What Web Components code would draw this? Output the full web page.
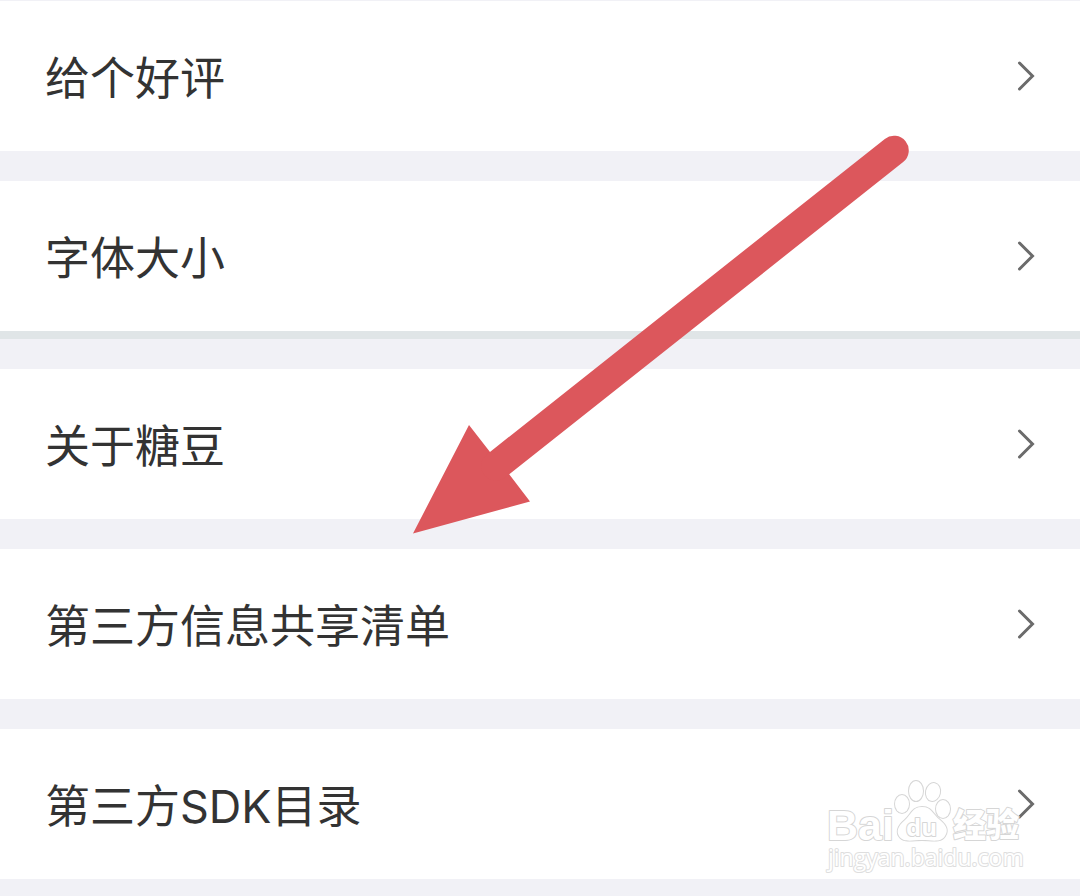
<!DOCTYPE html>
<html lang="zh-CN">
<head>
<meta charset="utf-8">
<meta name="viewport" content="width=device-width, initial-scale=1">
<title>设置</title>
<style>
  body {
    margin: 0;
    background: #f1f1f6;
    color: #333;
    font-family: Inter, "Noto Sans CJK SC", sans-serif;
  }
</style>
</head>
<body>
<settings-page>
  <settings-row href="#rate">给个好评</settings-row>
  <settings-row href="#font-size" divided>字体大小</settings-row>
  <settings-row href="#about">关于糖豆</settings-row>
  <settings-row href="#sharing">第三方信息共享清单</settings-row>
  <settings-row href="#sdk">第三方SDK目录</settings-row>
  <pointer-arrow slot="overlay"></pointer-arrow>
  <site-watermark slot="overlay"></site-watermark>
</settings-page>

<script>
class ShadowElement extends HTMLElement {
  constructor() {
    super();
    this.attachShadow({ mode: "open" }).innerHTML = this.constructor.markup;
  }
}

class SettingsPage extends ShadowElement {
  static markup = `
    <style>
      :host { display: block; position: relative; min-height: 100vh; overflow: hidden; box-sizing: border-box; border-top: 1px solid #f1f1f6; }
      nav { display: flex; flex-direction: column; gap: 30px; }
    </style>
    <nav aria-label="设置"><slot></slot></nav>
    <slot name="overlay"></slot>`;
}

class SettingsRow extends ShadowElement {
  static markup = `
    <style>
      :host { display: block; background: #fff; }
      :host([divided]) { border-bottom: 8px solid #e0e5e7; }
      a { display: flex; align-items: center; justify-content: space-between; padding: 45px; line-height: 54px; font-size: 45px; color: inherit; text-decoration: none; }
      span { padding-top: 6px; }
      svg { flex: none; width: 18px; height: 30px; }
    </style>
    <a><span><slot></slot></span>
      <svg viewBox="0 0 18 30" aria-hidden="true"><path d="M2.5 2 15.5 15 2.5 28" fill="none" stroke="#6b6b6b" stroke-width="3" stroke-linecap="round"/></svg>
    </a>`;
  connectedCallback() {
    this.shadowRoot.querySelector("a").href = this.getAttribute("href");
  }
}

class PointerArrow extends ShadowElement {
  static markup = `
    <style>
      :host { display: block; position: absolute; top: 0; left: 0; right: 0; pointer-events: none; }
      svg { display: block; width: 100%; }
    </style>
    <svg viewBox="0 1 1080 895" fill="#dc575c" aria-hidden="true">
      <path d="M413 533.500 469 425 490 452 509 474 530 501.500Z"/>
      <path d="M496 466 894 150.500" stroke="#dc575c" stroke-width="29.500" stroke-linecap="round"/>
    </svg>`;
}

class SiteWatermark extends ShadowElement {
  static markup = `
    <style>
      :host { display: block; position: absolute; right: 55px; bottom: 16px; width: 200px; pointer-events: none; }
      svg { display: block; width: 100%; }
      g { fill: #fff; stroke: #d6d6d6; stroke-width: 2; stroke-linejoin: round; paint-order: stroke; }
      .latin { font: bold 43px "Liberation Sans", sans-serif; }
      .du { font: bold 24px "Open Sans", sans-serif; }
      .han { font: 900 33px "Noto Sans CJK SC", sans-serif; }
      .url { font: 23px "Open Sans", sans-serif; stroke: #dedede; }
    </style>
    <svg viewBox="0 0 200 102" role="img" aria-label="百度经验">
      <g>
        <text class="latin" x="2" y="62">Bai</text>
        <ellipse cx="77" cy="26" rx="7" ry="9"/>
        <ellipse cx="91" cy="13" rx="7" ry="10"/>
        <ellipse cx="108" cy="14" rx="7" ry="9" transform="rotate(12 108 14)"/>
        <ellipse cx="118" cy="31" rx="7" ry="9"/>
        <path d="M97 29C87 29 86 37 80 42C73 48 71 53 74 58C78 65 88 62 97 62C106 62 116 65 120 58C124 52 121 47 115 42C108 37 107 29 97 29Z"/>
        <text class="du" x="81" y="58">du</text>
        <text class="han" x="128" y="59">经验</text>
        <text class="url" x="3" y="88">jingyan.baidu.com</text>
      </g>
    </svg>`;
}

customElements.define("settings-page", SettingsPage);
customElements.define("settings-row", SettingsRow);
customElements.define("pointer-arrow", PointerArrow);
customElements.define("site-watermark", SiteWatermark);
</script>
</body>
</html>
